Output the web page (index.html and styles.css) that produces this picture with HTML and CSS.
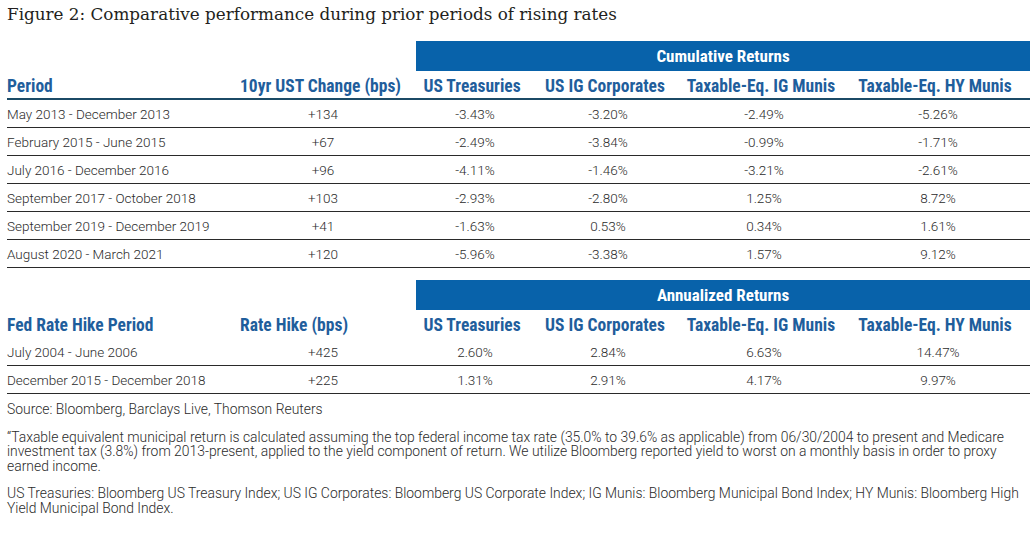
FILE: index.html
```html
<!DOCTYPE html>
<html>
<head>
<meta charset="utf-8">
<link rel="stylesheet" href="styles.css">
</head>
<body>
<h1 class="title">Figure 2: Comparative performance during prior periods of rising rates</h1>

<table class="perf">
  <colgroup>
    <col class="c1"><col class="c2"><col class="c3"><col class="c4"><col class="c5"><col class="c6">
  </colgroup>
  <thead>
    <tr class="band"><td colspan="2"></td><th colspan="4">Cumulative Returns</th></tr>
    <tr class="head lined">
      <th class="left">Period</th>
      <th class="sub">10yr UST Change (bps)</th>
      <th>US Treasuries</th>
      <th>US IG Corporates</th>
      <th>Taxable-Eq. IG Munis</th>
      <th>Taxable-Eq. HY Munis</th>
    </tr>
  </thead>
  <tbody>
    <tr><td class="left">May 2013 - December 2013</td><td>+134</td><td>-3.43%</td><td>-3.20%</td><td>-2.49%</td><td>-5.26%</td></tr>
    <tr><td class="left">February 2015 - June 2015</td><td>+67</td><td>-2.49%</td><td>-3.84%</td><td>-0.99%</td><td>-1.71%</td></tr>
    <tr><td class="left">July 2016 - December 2016</td><td>+96</td><td>-4.11%</td><td>-1.46%</td><td>-3.21%</td><td>-2.61%</td></tr>
    <tr><td class="left">September 2017 - October 2018</td><td>+103</td><td>-2.93%</td><td>-2.80%</td><td>1.25%</td><td>8.72%</td></tr>
    <tr><td class="left">September 2019 - December 2019</td><td>+41</td><td>-1.63%</td><td>0.53%</td><td>0.34%</td><td>1.61%</td></tr>
    <tr><td class="left">August 2020 - March 2021</td><td>+120</td><td>-5.96%</td><td>-3.38%</td><td>1.57%</td><td>9.12%</td></tr>
  </tbody>
</table>

<table class="perf second">
  <colgroup>
    <col class="c1"><col class="c2"><col class="c3"><col class="c4"><col class="c5"><col class="c6">
  </colgroup>
  <thead>
    <tr class="band"><td colspan="2"></td><th colspan="4">Annualized Returns</th></tr>
    <tr class="head">
      <th class="left">Fed Rate Hike Period</th>
      <th class="sub">Rate Hike (bps)</th>
      <th>US Treasuries</th>
      <th>US IG Corporates</th>
      <th>Taxable-Eq. IG Munis</th>
      <th>Taxable-Eq. HY Munis</th>
    </tr>
  </thead>
  <tbody>
    <tr><td class="left">July 2004 - June 2006</td><td>+425</td><td>2.60%</td><td>2.84%</td><td>6.63%</td><td>14.47%</td></tr>
    <tr><td class="left">December 2015 - December 2018</td><td>+225</td><td>1.31%</td><td>2.91%</td><td>4.17%</td><td>9.97%</td></tr>
  </tbody>
</table>

<div class="notes">
  <p>Source: Bloomberg, Barclays Live, Thomson Reuters</p>
  <p>“Taxable equivalent municipal return is calculated assuming the top federal income tax rate (35.0% to 39.6% as applicable) from 06/30/2004 to present and Medicare investment tax (3.8%) from 2013-present, applied to the yield component of return. We utilize Bloomberg reported yield to worst on a monthly basis in order to proxy earned income.</p>
  <p>US Treasuries: Bloomberg US Treasury Index; US IG Corporates: Bloomberg US Corporate Index; IG Munis: Bloomberg Municipal Bond Index; HY Munis: Bloomberg High Yield Municipal Bond Index.</p>
</div>
</body>
</html>
```

FILE: styles.css
```css
html, body {
  margin: 0;
  background: #ffffff;
}
body {
  padding: 3px 0 0 7px;
  width: 1023px;
  font-family: Roboto, "Noto Sans", sans-serif;
  color: #2b2b2b;
}
.title {
  font-family: "DejaVu Serif", "Liberation Serif", serif;
  font-weight: normal;
  font-size: 16.8px;
  line-height: 22px;
  margin: 0 0 16px;
  color: #231f20;
}
.perf {
  border-collapse: collapse;
  table-layout: fixed;
  width: 1023px;
}
.c1 { width: 223px; }
.c2 { width: 186px; }
.c3 { width: 118px; }
.c4 { width: 148px; }
.c5 { width: 164px; }
.c6 { width: 184px; }
.perf th, .perf td {
  padding: 0;
  text-align: center;
  white-space: nowrap;
}
.perf .left {
  text-align: left;
}
.band th {
  height: 30px;
  background: #0862aa;
  color: #ffffff;
  font-weight: 700;
  font-size: 17px;
  font-stretch: condensed;
}
.head th {
  height: 25px;
  padding: 2px 6px 0 0;
  color: #1f5e9c;
  font-weight: 700;
  font-size: 17.5px;
  font-stretch: condensed;
}
.head th.left {
  padding-right: 0;
}
.head th.sub {
  text-align: left;
  padding-left: 10px;
  padding-right: 0;
}
.head.lined th {
  border-bottom: 2px solid #1b4a66;
}
.perf tbody td {
  height: 27px;
  font-size: 13.5px;
  font-weight: 300;
  color: #2b2b2b;
  border-bottom: 1px solid #2a2a2a;
}
.second {
  margin-top: 12px;
}
.second .head th {
  height: 26px;
}
.notes {
  margin-top: 8px;
  width: 1015px;
  font-size: 13.9px;
  font-weight: 300;
  line-height: 14.5px;
  color: #2b2b2b;
}
.notes p {
  margin: 0 0 13px;
}
```
